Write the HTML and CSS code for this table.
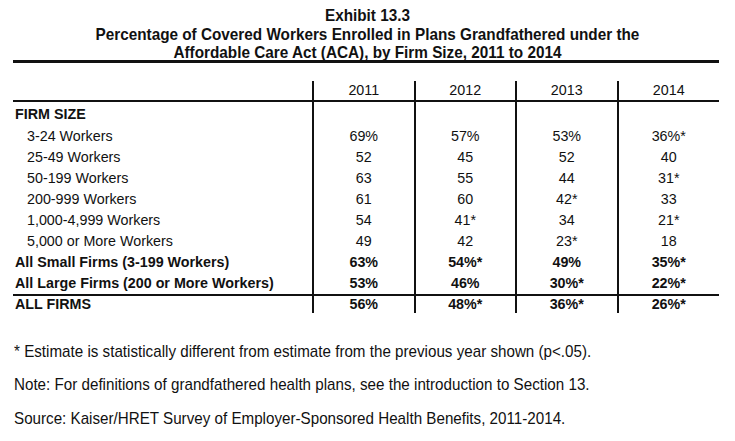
FILE: index.html
```html
<!DOCTYPE html>
<html lang="en">
<head>
<meta charset="utf-8">
<title>Exhibit 13.3</title>
<link rel="stylesheet" href="styles.css">
</head>
<body>
<div class="page">
  <header class="title">
    <div>Exhibit 13.3</div>
    <div>Percentage of Covered Workers Enrolled in Plans Grandfathered under the</div>
    <div>Affordable Care Act (ACA), by Firm Size, 2011 to 2014</div>
  </header>
  <div class="rule-top"></div>
  <table class="data">
    <colgroup>
      <col class="c-label"><col class="c-year"><col class="c-year"><col class="c-year"><col class="c-year">
    </colgroup>
    <thead>
      <tr class="head">
        <th></th><th>2011</th><th>2012</th><th>2013</th><th>2014</th>
      </tr>
    </thead>
    <tbody>
      <tr class="section"><td class="label strong">FIRM SIZE</td><td></td><td></td><td></td><td></td></tr>
      <tr><td class="label sub">3-24 Workers</td><td>69%</td><td>57%</td><td>53%</td><td>36%*</td></tr>
      <tr><td class="label sub">25-49 Workers</td><td>52</td><td>45</td><td>52</td><td>40</td></tr>
      <tr><td class="label sub">50-199 Workers</td><td>63</td><td>55</td><td>44</td><td>31*</td></tr>
      <tr><td class="label sub">200-999 Workers</td><td>61</td><td>60</td><td>42*</td><td>33</td></tr>
      <tr><td class="label sub">1,000-4,999 Workers</td><td>54</td><td>41*</td><td>34</td><td>21*</td></tr>
      <tr><td class="label sub">5,000 or More Workers</td><td>49</td><td>42</td><td>23*</td><td>18</td></tr>
      <tr class="strong-row"><td class="label">All Small Firms (3-199 Workers)</td><td>63%</td><td>54%*</td><td>49%</td><td>35%*</td></tr>
      <tr class="strong-row"><td class="label">All Large Firms (200 or More Workers)</td><td>53%</td><td>46%</td><td>30%*</td><td>22%*</td></tr>
      <tr class="strong-row total"><td class="label">ALL FIRMS</td><td>56%</td><td>48%*</td><td>36%*</td><td>26%*</td></tr>
    </tbody>
  </table>
  <div class="notes">
    <p>* Estimate is statistically different from estimate from the previous year shown (p&lt;.05).</p>
    <p>Note: For definitions of grandfathered health plans, see the introduction to Section 13.</p>
    <p>Source: Kaiser/HRET Survey of Employer-Sponsored Health Benefits, 2011-2014.</p>
  </div>
</div>
</body>
</html>
```

FILE: styles.css
```css
html, body {
  margin: 0;
  padding: 0;
  background: #ffffff;
}

.page {
  width: 735px;
  height: 441px;
  overflow: hidden;
  color: #111111;
  font-family: "Liberation Sans", Arial, sans-serif;
}

.title {
  padding-top: 7px;
  text-align: center;
  font-family: "Liberation Sans", Arial, sans-serif;
  font-weight: bold;
  font-size: 17px;
  line-height: 18.5px;
  transform: scaleX(0.9);
  transform-origin: 367px 0;
}

.rule-top {
  margin: -3px 0 0 13px;
  width: 706px;
  border-top: 3px solid #111111;
}

.data {
  margin: 18px 0 0 13px;
  width: 706px;
  border-collapse: collapse;
  table-layout: fixed;
  font-size: 14.3px;
}

.c-label { width: 300px; }
.c-year { width: 101.5px; }

.data th,
.data td {
  padding: 0;
  text-align: center;
  font-weight: normal;
  border-left: 2px solid #111111;
  height: 21px;
  line-height: 16px;
  white-space: nowrap;
  vertical-align: middle;
}

.data th:first-child,
.data td:first-child {
  border-left: none;
}

.data .head th {
  height: 19px;
  border-bottom: 2px solid #111111;
}

.data .section td {
  height: 23px;
  padding-top: 1px;
}

.data td.label {
  text-align: left;
  padding-left: 2px;
}

.data td.sub {
  padding-left: 14px;
}

.data td.strong,
.data .strong-row td {
  font-weight: bold;
}

.data tr.total td {
  border-top: 2px solid #111111;
  height: 17px;
}

.notes {
  margin: 30px 0 0 14px;
  font-family: "Liberation Sans", Arial, sans-serif;
  font-size: 17px;
  line-height: 18px;
  transform: scaleX(0.893);
  transform-origin: 0 0;
  white-space: nowrap;
}

.notes p {
  margin: 0 0 15.5px 0;
}
```
